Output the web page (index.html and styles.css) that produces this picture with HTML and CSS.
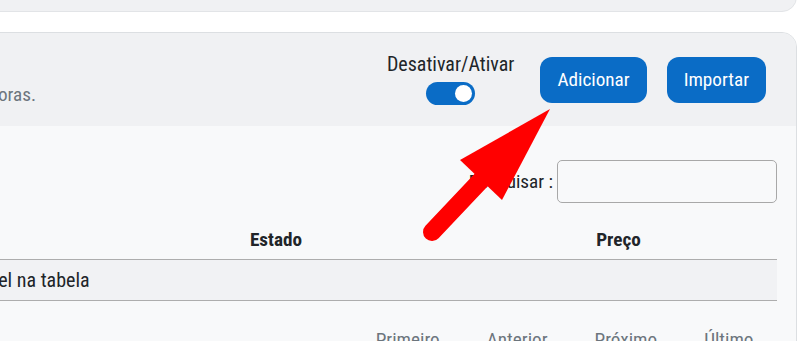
FILE: index.html
```html
<!DOCTYPE html>
<html lang="pt-BR">
<head>
  <meta charset="UTF-8">
  <title>Produtos</title>
  <link rel="stylesheet" href="styles.css">
</head>
<body>

<div class="page">
  <div class="card card-top"></div>

  <div class="card">
    <div class="card-header">
      <div class="header-text">
        <h5 class="title">Produtos</h5>
        <p class="subtitle">Gerencie o catálogo de produtos e os preços a qualquer momento, em todas as horas.</p>
      </div>

      <div class="header-actions">
        <div class="switch-group">
          <span class="switch-label">Desativar/Ativar</span>
          <span class="switch on"><span class="knob"></span></span>
        </div>
        <button class="btn">Adicionar</button>
        <button class="btn">Importar</button>
      </div>
    </div>

    <div class="card-body">
      <div class="search-row">
        <label for="search">Pesquisar :</label>
        <input type="search" id="search">
      </div>

      <table class="data-table">
        <colgroup>
          <col class="col-name">
          <col class="col-state">
          <col class="col-price">
        </colgroup>
        <thead>
          <tr>
            <th>Nome</th>
            <th>Estado</th>
            <th>Preço</th>
          </tr>
        </thead>
        <tbody>
          <tr>
            <td colspan="3" class="empty">Nenhum dado disponível na tabela</td>
          </tr>
        </tbody>
      </table>

      <div class="pagination">
        <a class="page-btn">Primeiro</a>
        <a class="page-btn">Anterior</a>
        <a class="page-btn">Próximo</a>
        <a class="page-btn">Último</a>
      </div>
    </div>
  </div>
</div>

<!-- seta de destaque por cima do botão -->
<svg class="arrow" width="805" height="341" viewBox="0 0 805 341">
  <line x1="432" y1="232" x2="484" y2="177" stroke="#ff0000" stroke-width="18" stroke-linecap="round"/>
  <polygon points="550,109 460,160 502,200" fill="#ff0000"/>
</svg>

</body>
</html>
```

FILE: styles.css
```css
body {
  margin: 0;
  background: #ffffff;
  font-family: "Roboto Condensed", Roboto, sans-serif;
  font-size: 19.2px;
  color: #212529;
  position: relative;
  overflow: hidden;
  height: 341px;
}
.page {
  margin-left: -891px;
  width: 1688px;
}
.card {
  background: #f8f9fa;
  border: 1px solid #dcdfe2;
  border-radius: 15px;
  overflow: hidden;
}
.card-top {
  background: #f0f1f3;
  height: 60px;
  margin-top: -50px;
  margin-bottom: 20px;
  border-color: #e2e4e7;
}
.card-header {
  background: #f0f1f3;
  height: 93px;
  display: flex;
  align-items: center;
  justify-content: space-between;
  padding: 0 30px 0 24px;
}
.header-text {
  width: 902px;
  text-align: right;
}
.title {
  text-align: left;
  margin: 0 0 4px;
  font-size: 22px;
  font-weight: 500;
}
.subtitle {
  margin: 0;
  color: #6c757d;
  white-space: nowrap;
}
.header-actions {
  display: flex;
  align-items: center;
}
.switch-group {
  display: flex;
  flex-direction: column;
  align-items: center;
  gap: 6px;
  margin-right: 26px;
  margin-top: -2px;
}
.switch-label {
  font-size: 20px;
  line-height: 23px;
}
.switch {
  width: 49px;
  height: 23px;
  border-radius: 12px;
  background: #0a6cc6;
  display: flex;
  align-items: center;
  justify-content: flex-end;
  padding: 0 3px;
  box-sizing: border-box;
}
.knob {
  width: 17px;
  height: 17px;
  border-radius: 50%;
  background: #ffffff;
}
.btn {
  font-family: inherit;
  font-size: 19.2px;
  color: #ffffff;
  background: #0a6cc6;
  border: none;
  border-radius: 12px;
  height: 46px;
  padding: 0 17px;
  margin-left: 20px;
  cursor: pointer;
}
.btn:first-of-type {
  margin-left: 0;
}
.card-body {
  padding: 34px 19px 0 20px;
}
.search-row {
  display: flex;
  justify-content: flex-end;
  align-items: center;
  gap: 4px;
}
.search-row input {
  width: 220px;
  height: 43px;
  box-sizing: border-box;
  border: 1px solid #a8a8a8;
  border-radius: 5px;
  background: #f8f9fa;
}
.data-table {
  width: 100%;
  table-layout: fixed;
  border-collapse: collapse;
  margin-top: 18px;
}
.col-state {
  width: 368px;
}
.col-price {
  width: 317px;
}
.data-table th {
  font-weight: bold;
  text-align: center;
  padding: 9px 12px;
  line-height: 20px;
  border-bottom: 1px solid #adadad;
}
.data-table td {
  font-size: 20px;
  padding: 9px 12px;
  line-height: 22px;
  background: #f1f2f4;
  border-bottom: 1px solid #adadad;
}
.data-table td.empty {
  text-align: center;
}
.pagination {
  display: flex;
  justify-content: flex-end;
  margin-top: 19px;
}
.page-btn {
  color: #6c757d;
  padding: 8px 23.5px;
  line-height: 24px;
}
.arrow {
  position: absolute;
  left: 0;
  top: 0;
  pointer-events: none;
}
```
